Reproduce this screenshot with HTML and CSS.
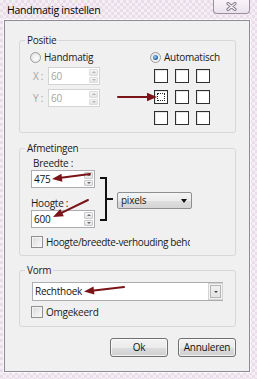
FILE: index.html
```html
<!DOCTYPE html>
<html lang="nl">
<head>
<meta charset="utf-8">
<title>Handmatig instellen</title>
<link rel="stylesheet" href="styles.css">
</head>
<body>
<div class="window">
  <div class="titlebar">
    <span class="title">Handmatig instellen</span>
    <span class="close">
      <svg width="11" height="9" viewBox="0 0 11 9">
        <path d="M2 1.5 L9 7.5 M9 1.5 L2 7.5" stroke="#857b88" stroke-width="3.2" stroke-linecap="round"/>
        <path d="M2 1.5 L9 7.5 M9 1.5 L2 7.5" stroke="#f6f2f6" stroke-width="1.3" stroke-linecap="round"/>
      </svg>
    </span>
  </div>

  <div class="panel">
    <fieldset class="group positie">
      <legend>Positie</legend>
      <div class="pos-body">
        <div class="pos-left">
          <div class="radio-row"><span class="radio"></span>Handmatig</div>
          <div class="coord-row first">
            <span class="coord-label">X :</span>
            <div class="spin disabled w52"><span class="val">60</span><span class="spin-btns"><span class="sb up"></span><span class="sb down"></span></span></div>
          </div>
          <div class="coord-row">
            <span class="coord-label">Y :</span>
            <div class="spin disabled w52"><span class="val">60</span><span class="spin-btns"><span class="sb up"></span><span class="sb down"></span></span></div>
          </div>
        </div>
        <div class="pos-right">
          <div class="radio-row"><span class="radio checked"></span>Automatisch</div>
          <div class="anchor-grid">
            <span class="cell"></span><span class="cell"></span><span class="cell"></span>
            <span class="cell focus"></span><span class="cell"></span><span class="cell"></span>
            <span class="cell"></span><span class="cell"></span><span class="cell"></span>
          </div>
        </div>
      </div>
    </fieldset>

    <fieldset class="group afmetingen">
      <legend>Afmetingen</legend>
      <div class="dims-body">
        <div class="dims-row">
          <div class="dims-left">
            <div class="field-label">Breedte :</div>
            <div class="spin w64"><span class="val">475</span><span class="spin-btns"><span class="sb up"></span><span class="sb down"></span></span></div>
            <div class="field-label second">Hoogte :</div>
            <div class="spin w64"><span class="val">600</span><span class="spin-btns"><span class="sb up"></span><span class="sb down"></span></span></div>
          </div>
          <div class="select">pixels<span class="caret"></span></div>
        </div>
        <div class="check-row clip"><span class="checkbox"></span><span class="clip-text">Hoogte/breedte-verhouding behouden</span></div>
      </div>
    </fieldset>

    <fieldset class="group vorm">
      <legend>Vorm</legend>
      <div class="vorm-body">
        <div class="combo"><span class="combo-text">Rechthoek</span><span class="combo-btn"></span></div>
        <div class="check-row omg"><span class="checkbox"></span>Omgekeerd</div>
      </div>
    </fieldset>

    <div class="buttons">
      <span class="btn">Ok</span>
      <span class="btn">Annuleren</span>
    </div>
  </div>

  <svg class="annotations" width="257" height="379" viewBox="0 0 257 379">
    <g stroke="#7a1418" stroke-width="2" fill="none" stroke-linecap="round">
      <path d="M118 97 H149"/>
      <path d="M90 174 L61 177.8"/>
      <path d="M88 200 L62 212.6"/>
      <path d="M124 287 L94 290.4"/>
    </g>
    <g fill="#7a1418">
      <polygon points="147,92.8 157,97 147,101.2"/>
      <polygon points="62.4,181.7 52,179 61.4,173.7"/>
      <polygon points="63.8,216.2 53,217 60.3,209"/>
      <polygon points="94.4,294.4 84,291.5 93.5,286.4"/>
    </g>
    <path d="M100 178 H106 V220 H100 M106 199 H113" stroke="#111" stroke-width="2" fill="none"/>
  </svg>
</div>
</body>
</html>
```

FILE: styles.css
```css
* { box-sizing: border-box; }

body {
  margin: 0;
  width: 257px;
  height: 379px;
  overflow: hidden;
  font-family: "Open Sans", "Noto Sans", sans-serif;
  font-size: 10px;
  letter-spacing: -0.25px;
  color: #1a1a1a;
  background: #efe7ef;
}

.window {
  position: relative;
  height: 379px;
  background:
    repeating-conic-gradient(#e8dde9 0 25%, #f5eff5 0 50%) 0 0 / 6px 6px;
}

.titlebar {
  height: 20px;
  display: flex;
  justify-content: space-between;
  align-items: flex-start;
}

.title {
  padding: 3px 0 0 7px;
  line-height: 14px;
  font-size: 10.5px;
  color: #000;
}

.close {
  width: 37px;
  height: 14px;
  margin-right: 7px;
  border: 1px solid #9c8f9e;
  border-top: none;
  border-radius: 0 0 4px 4px;
  background: linear-gradient(#f8f4f8, #ebe3ec);
  display: flex;
  align-items: center;
  justify-content: center;
}

.panel {
  margin-left: 4px;
  width: 246px;
  border: 1px solid #8f8a94;
  background: #f0f0f0;
  padding: 12px 0 14px 14px;
  box-shadow: 0 0 0 1px rgba(255, 255, 255, 0.7);
}

.group {
  width: 217px;
  min-width: 0;
  margin: 0;
  padding: 0;
  border: 1px solid #d5d8db;
  border-radius: 3px;
}

.group legend {
  margin-left: 5px;
  padding: 0 2px;
  line-height: 14px;
  color: #1a1a1a;
}

.afmetingen { margin-top: 8px; }
.vorm { margin-top: 7px; }

/* Positie */
.pos-body {
  display: flex;
  gap: 50px;
  padding: 3px 0 7px 10px;
}

.pos-left { width: 70px; }

.radio-row {
  display: flex;
  align-items: center;
  height: 14px;
  line-height: 14px;
  white-space: nowrap;
}

.radio {
  width: 11px;
  height: 11px;
  margin-right: 3px;
  border: 1px solid #9a9b9c;
  border-radius: 50%;
  background: radial-gradient(circle at 60% 60%, #fdfdfd, #dedede);
  flex: none;
  position: relative;
}

.radio.checked::after {
  content: "";
  position: absolute;
  left: 2px;
  top: 2px;
  width: 5px;
  height: 5px;
  border-radius: 50%;
  background: radial-gradient(circle at 40% 40%, #9fd0f5, #2a6aa8 60%, #123f6b);
}

.coord-row {
  display: flex;
  align-items: center;
  margin-top: 4px;
}

.coord-row.first { margin-top: 3px; }

.coord-label {
  width: 18px;
  padding-left: 3px;
  color: #a3a3a3;
}

.spin {
  height: 18px;
  display: flex;
  border: 1px solid #abadb3;
  background: #fff;
}

.spin.w52 { width: 52px; }
.spin.w64 { width: 64px; }

.spin.disabled { border-color: #d2d3d5; }

.val {
  flex: 1;
  padding-left: 2px;
  line-height: 16px;
  color: #111;
}

.spin.disabled .val { color: #a3a3a3; }

.spin-btns {
  width: 10px;
  padding: 1px 1px 1px 0;
  display: flex;
  flex-direction: column;
  gap: 1px;
}

.sb {
  flex: 1;
  border: 1px solid #c9cacc;
  border-radius: 1px;
  background: linear-gradient(#f6f6f6, #e4e4e4);
  display: flex;
  align-items: center;
  justify-content: center;
}

.sb::after {
  content: "";
  border-left: 2px solid transparent;
  border-right: 2px solid transparent;
}

.sb.up::after { border-bottom: 2px solid #6d6d6d; }
.sb.down::after { border-top: 2px solid #6d6d6d; }

.spin.disabled .sb { border-color: #dcdcdc; }
.spin.disabled .sb.up::after { border-bottom-color: #b5b5b5; }
.spin.disabled .sb.down::after { border-top-color: #b5b5b5; }

.anchor-grid {
  margin: 5px 0 0 4px;
  display: grid;
  grid-template-columns: repeat(3, 14px);
  grid-auto-rows: 14px;
  gap: 7px;
}

.cell {
  border: 1px solid #2f2f2f;
  background: #fff;
  box-shadow: inset 1px 1px 0 #e6e6e6;
  position: relative;
}

.cell.focus::after {
  content: "";
  position: absolute;
  inset: 2px;
  border: 1px dotted #222;
}

/* Afmetingen */
.dims-body { padding: 1px 0 6px 11px; }

.dims-row {
  display: flex;
  align-items: flex-start;
}

.dims-left { width: 64px; }

.field-label {
  line-height: 14px;
  padding-left: 2px;
}

.field-label.second {
  margin-top: 8px;
  padding-left: 0;
}

.select {
  margin: 36px 0 0 22px;
  width: 75px;
  height: 17px;
  padding: 0 4px 0 3px;
  display: flex;
  align-items: center;
  justify-content: space-between;
  line-height: 15px;
  border: 1px solid #8e8f8f;
  border-radius: 2px;
  background: linear-gradient(#f4f4f4 0%, #ececec 50%, #dedede 51%, #d4d4d4 100%);
}

.caret {
  border-left: 3.5px solid transparent;
  border-right: 3.5px solid transparent;
  border-top: 4px solid #111;
}

.check-row {
  display: flex;
  align-items: center;
  height: 14px;
  line-height: 14px;
  margin-top: 7px;
  white-space: nowrap;
}

.check-row.clip {
  width: 159px;
  overflow: hidden;
}

.clip-text {
  letter-spacing: -0.35px;
}

.checkbox {
  flex: none;
  width: 12px;
  height: 12px;
  margin-right: 3px;
  border: 1px solid #8f8f8f;
  background: linear-gradient(135deg, #d9d9d9, #fbfbfb);
  box-shadow: inset 0 0 0 1px #f4f4f4;
}

/* Vorm */
.vorm-body { padding: 5px 0 7px 12px; }

.combo {
  width: 191px;
  height: 19px;
  display: flex;
  border: 1px solid #abadb3;
  background: #fff;
}

.combo-text {
  flex: 1;
  padding-left: 2px;
  line-height: 17px;
  color: #111;
}

.combo-btn {
  width: 15px;
  margin: 0 -1px 0 0;
  border: 1px solid #d3d3d3;
  box-shadow: inset 0 0 0 1px #f4f4f4, inset 0 0 0 2px #b4b4b4;
  background: linear-gradient(#f3f3f3, #e1e1e1);
  display: flex;
  align-items: center;
  justify-content: center;
}

.combo-btn::after {
  content: "";
  border-left: 2px solid transparent;
  border-right: 2px solid transparent;
  border-top: 2px solid #444;
}

.check-row.omg {
  margin: 4px 0 0 -1px;
}

/* Buttons */
.buttons {
  width: 217px;
  margin-top: 11px;
  display: flex;
  justify-content: flex-end;
  gap: 10px;
}

.btn {
  width: 58px;
  height: 19px;
  line-height: 17px;
  text-align: center;
  border: 1px solid #707070;
  border-radius: 3px;
  background: linear-gradient(#f2f2f2 0%, #ebebeb 50%, #dddddd 51%, #cfcfcf 100%);
  box-shadow: inset 0 0 0 1px rgba(255, 255, 255, 0.7);
  color: #111;
}

.annotations {
  position: absolute;
  left: 0;
  top: 0;
  pointer-events: none;
}
```
